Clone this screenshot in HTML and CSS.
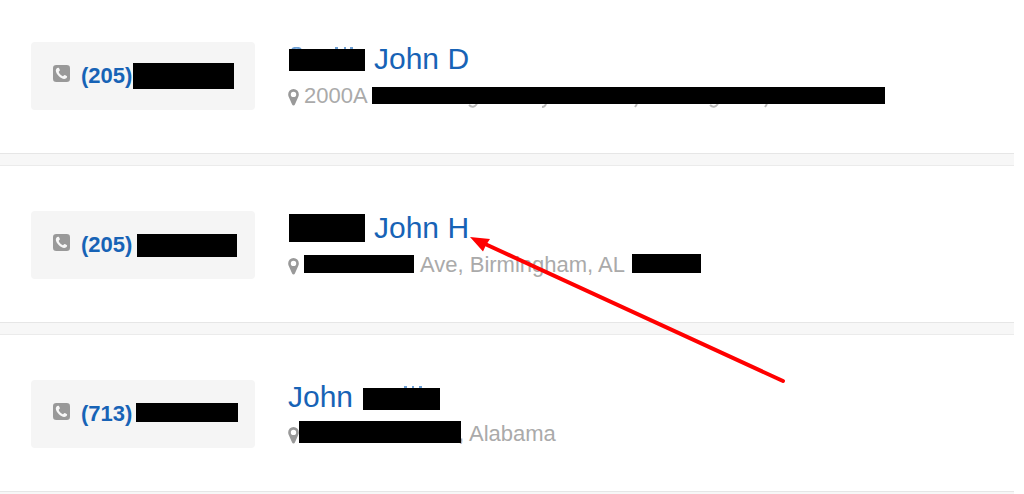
FILE: index.html
```html
<!DOCTYPE html>
<html lang="en">
<head>
<meta charset="utf-8">
<title>Phone listings</title>
<link rel="stylesheet" href="styles.css">
</head>
<body>
<svg class="symbols" aria-hidden="true">
  <symbol id="phone" viewBox="0 0 17 17">
    <rect width="17" height="17" rx="3.300" fill="#999"/>
    <path fill="#f7f7f7" d="M5.200 2.800C5.800 2.600 6 3 6.200 3.500L6.900 5C7.200 5.900 5.700 6.400 5.700 7.100C6 8.600 8.300 10.900 9.800 11.200C10.600 11.300 11.100 9.800 11.900 10.100L13.700 11.100C14.200 11.400 14.200 11.700 14 12.300C13.600 13.500 12.300 14 11.300 14C7.500 13.800 3.100 9.400 2.800 5.600C2.800 4.400 3.600 3 5.200 2.800Z"/>
  </symbol>
  <symbol id="pin" viewBox="0 0 11 17">
    <path fill="#999" fill-rule="evenodd" d="M5.500 0A5.300 5.300 0 0 1 10.800 5.400C10.800 6.600 10.500 7.300 10.200 8L6.900 15.500C6.400 16.700 4.600 16.700 4.100 15.500L.8 8C.5 7.300.2 6.600.2 5.400A5.300 5.300 0 0 1 5.500 0ZM5.500 2.700A2.700 2.700 0 1 0 5.500 8.100A2.700 2.700 0 1 0 5.500 2.700Z"/>
  </symbol>
</svg>
<main class="list">
  <article class="row">
    <div class="phone">
      <svg class="phone-icon" aria-hidden="true"><use href="#phone"/></svg>
      <a href="#" class="number">(205)</a>
      <span class="bar phone-bar-a"></span>
    </div>
    <div class="info">
      <h2 class="line title">
        <span class="bar name-bar"><svg class="marks marks-top" viewBox="0 0 76 2" aria-hidden="true"><path d="M3 2Q7.500-.5 12 2M46 1h3M55 1h2M61 1h3"/></svg></span>
        <a href="#" class="after-name">John D</a>
      </h2>
      <p class="line address">
        <svg class="pin-icon" aria-hidden="true"><use href="#pin"/></svg>
        <span class="after-pin">2000A</span>
        <span class="bar street-bar"><svg class="marks marks-bottom" viewBox="0 0 513 4" aria-hidden="true"><path d="M97 1Q101 5 105 0M170 3Q173 3 174 0M263 3L265 0M338 1Q342 5 346 0M393 3L395 0"/></svg></span>
      </p>
    </div>
  </article>
  <article class="row">
    <div class="phone">
      <svg class="phone-icon" aria-hidden="true"><use href="#phone"/></svg>
      <a href="#" class="number">(205)</a>
      <span class="bar phone-bar-b"></span>
    </div>
    <div class="info">
      <h2 class="line title">
        <span class="bar name-bar tall"></span>
        <a href="#" class="after-name">John H</a>
      </h2>
      <p class="line address">
        <svg class="pin-icon" aria-hidden="true"><use href="#pin"/></svg>
        <span class="bar avenue-bar"></span>
        <span class="after-bar">Ave, Birmingham, AL</span>
        <span class="bar zip-bar"></span>
      </p>
    </div>
    <svg class="arrow" viewBox="0 0 320 150" aria-hidden="true">
      <path d="M14 6.500L313 144" stroke="#f00" stroke-width="4" stroke-linecap="round"/>
      <path d="M0 0L20 2L16 8L13 14.500Z" fill="#f00"/>
    </svg>
  </article>
  <article class="row">
    <div class="phone">
      <svg class="phone-icon" aria-hidden="true"><use href="#phone"/></svg>
      <a href="#" class="number">(713)</a>
      <span class="bar phone-bar-c"></span>
    </div>
    <div class="info">
      <h2 class="line title">
        <a href="#">John</a>
        <span class="bar surname-bar"><svg class="marks marks-top" viewBox="0 0 77 2" aria-hidden="true"><path d="M41 1h3M49 1h2M56 1h3"/></svg></span>
      </h2>
      <p class="line address">
        <svg class="pin-icon" aria-hidden="true"><use href="#pin"/></svg>
        <span class="bar city-bar"></span>
        <span class="state">, Alabama</span>
      </p>
    </div>
  </article>
</main>
</body>
</html>
```
FILE: styles.css
```css
body {
  margin: 0;
  background: #fff;
  font-family: "Liberation Sans", Arial, sans-serif;
}

.symbols {
  position: absolute;
  width: 0;
  height: 0;
}

.list {
  display: flex;
  flex-direction: column;
  gap: 11px;
  box-sizing: border-box;
  min-height: 100vh;
  margin-right: 10px;
  background: #f7f7f7;
}

.row {
  position: relative;
  display: flex;
  align-items: flex-start;
  gap: 33px;
  padding: 45px 31px 43px;
  background: #fff;
  border-top: 1px solid #ebebeb;
  border-bottom: 1px solid #e6e6e6;
}

.row:first-child {
  padding-top: 42px;
  border-top: 0;
}

.phone {
  display: flex;
  align-items: flex-start;
  flex: none;
  box-sizing: border-box;
  width: 224px;
  padding: 21px 0 21px 22px;
  border-radius: 4px;
  background: #f5f5f5;
}

.phone-icon {
  flex: none;
  width: 17px;
  height: 17px;
  margin: 2px 11px 0 0;
}

.number {
  font-size: 22px;
  font-weight: bold;
  line-height: 26px;
}

a {
  color: #1763b6;
  text-decoration: none;
}

.info {
  flex: 1;
  min-width: 0;
}

.line {
  display: flex;
  align-items: flex-start;
  margin: 0;
  white-space: nowrap;
}

.title {
  font-size: 30px;
  font-weight: normal;
  line-height: 34px;
}

.address {
  margin-top: 7px;
  color: #aaa;
  font-size: 22px;
  line-height: 26px;
}

.after-name {
  margin-left: 9px;
}

.after-pin {
  margin-left: 5px;
}

.after-bar {
  margin-left: 6px;
}

.state {
  margin-left: -3px;
}

.pin-icon {
  flex: none;
  width: 11px;
  height: 17px;
  margin-top: 6px;
}

.bar {
  position: relative;
  z-index: 1;
  flex: none;
  background: #000;
}

.phone-bar-a {
  width: 101px;
  height: 26px;
  margin-left: 1px;
}

.phone-bar-b {
  width: 100px;
  height: 23px;
  margin: 2px 0 0 5px;
}

.phone-bar-c {
  width: 102px;
  height: 19px;
  margin: 2px 0 0 4px;
}

.name-bar {
  width: 76px;
  height: 22px;
  margin: 7px 0 0 1px;
}

.name-bar.tall {
  height: 28px;
  margin-top: 3px;
}

.surname-bar {
  width: 77px;
  height: 22px;
  margin: 8px 0 0 10px;
}

.street-bar {
  width: 513px;
  height: 17px;
  margin: 4px 0 0 4px;
}

.avenue-bar {
  width: 110px;
  height: 18px;
  margin: 3px 0 0 5px;
}

.zip-bar {
  width: 69px;
  height: 19px;
  margin: 2px 0 0 7px;
}

.city-bar {
  width: 162px;
  height: 22px;
}

.marks {
  position: absolute;
  left: 0;
  width: 100%;
  fill: none;
  stroke-width: 2;
}

.marks-top {
  bottom: 100%;
  height: 2px;
  stroke: #6d9fd4;
}

.marks-bottom {
  top: 100%;
  height: 4px;
  stroke: #bbb;
}

.arrow {
  position: absolute;
  z-index: 2;
  top: 71px;
  left: 470px;
  width: 320px;
  height: 150px;
  fill: none;
}
```
